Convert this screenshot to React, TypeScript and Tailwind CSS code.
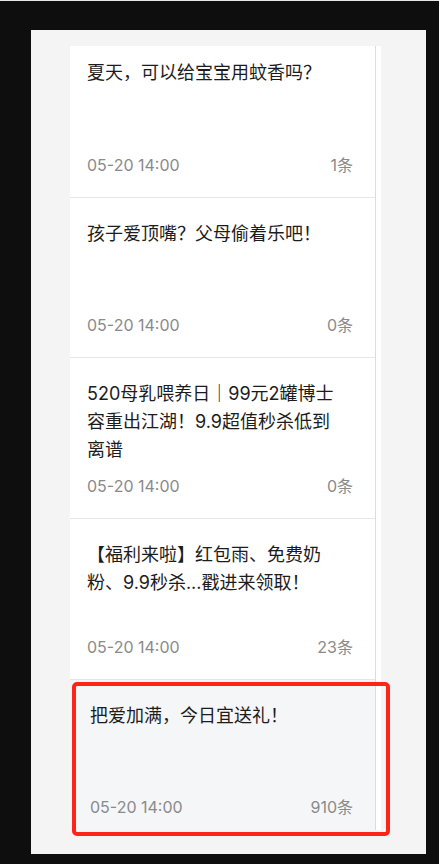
const items = [
  { title: "夏天，可以给宝宝用蚊香吗？", time: "05-20 14:00", count: "1条" },
  { title: "孩子爱顶嘴？父母偷着乐吧！", time: "05-20 14:00", count: "0条" },
  {
    title: "520母乳喂养日｜99元2罐博士容重出江湖！9.9超值秒杀低到离谱",
    time: "05-20 14:00",
    count: "0条",
  },
  {
    title: "【福利来啦】红包雨、免费奶粉、9.9秒杀...戳进来领取！",
    time: "05-20 14:00",
    count: "23条",
  },
  { title: "把爱加满，今日宜送礼！", time: "05-20 14:00", count: "910条" },
];

export default function App() {
  return (
    <div
      className="min-h-[864px] bg-[#0e0e0e] border-t border-[#e6e6e6] pt-[29px] pl-[31px] pr-[13px]"
      style={{ fontFamily: 'Inter, "Noto Sans CJK SC", sans-serif' }}
    >
      <div className="relative w-[395px] h-[824px] bg-[#f4f4f4] pt-[16px] pl-[39px]">
        <div className="flex w-[311px] h-[784px] overflow-hidden bg-white">
          <div className="w-[306px] shrink-0 border-r border-[#dcdcdc]">
            <ul className="-mt-[9px]">
              {items.map((item, i) => {
                const active = i === items.length - 1;
                return (
                  <li
                    key={i}
                    className={
                      "flex h-[160.7px] flex-col justify-between border-b border-[#e6e6e6] pt-[22px] pb-[21px] pr-[22px] " +
                      (active ? "bg-[#f5f6f8] pl-[20px]" : "pl-[17px]")
                    }
                  >
                    <p className="max-w-[248px] text-[18px] leading-[28px] text-[#1c1c1c]">
                      {item.title}
                    </p>
                    <div className="flex items-center justify-between text-[16px] leading-[22px] text-[#8a8a8a]">
                      <span>{item.time}</span>
                      <span>{item.count}</span>
                    </div>
                  </li>
                );
              })}
            </ul>
          </div>
          <div className="flex-1 bg-white" />
        </div>

        {/* selection highlight drawn over the last item */}
        <div className="pointer-events-none absolute left-[41px] top-[652px] w-[318px] h-[154px] rounded-[5px] border-[4px] border-[#ff2418]" />
      </div>
    </div>
  );
}
